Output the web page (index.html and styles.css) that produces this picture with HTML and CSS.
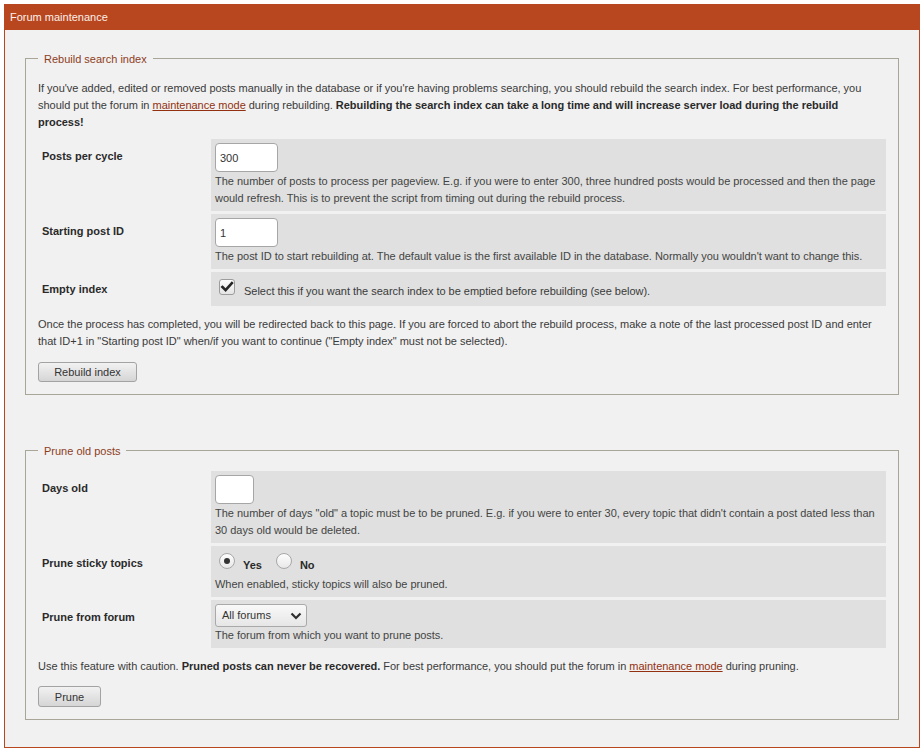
FILE: index.html
```html
<!DOCTYPE html>
<html lang="en">
<head>
<meta charset="utf-8">
<title>Forum maintenance</title>
<link rel="stylesheet" href="styles.css">
</head>
<body>
<div class="panel">
  <h1 class="panel-head">Forum maintenance</h1>
  <div class="panel-body">
    <fieldset class="box">
      <legend>Rebuild search index</legend>
      <p class="intro">If you've added, edited or removed posts manually in the database or if you're having problems searching, you should rebuild the search index. For best performance, you should put the forum in <a href="#">maintenance mode</a> during rebuilding. <strong>Rebuilding the search index can take a long time and will increase server load during the rebuild process!</strong></p>
      <dl class="row">
        <dt>Posts per cycle</dt>
        <dd>
          <input class="text w-wide" type="text" value="300">
          <p class="desc after-input">The number of posts to process per pageview. E.g. if you were to enter 300, three hundred posts would be processed and then the page would refresh. This is to prevent the script from timing out during the rebuild process.</p>
        </dd>
      </dl>
      <dl class="row">
        <dt>Starting post ID</dt>
        <dd>
          <input class="text w-wide" type="text" value="1">
          <p class="desc after-input">The post ID to start rebuilding at. The default value is the first available ID in the database. Normally you wouldn't want to change this.</p>
        </dd>
      </dl>
      <dl class="row last">
        <dt>Empty index</dt>
        <dd>
          <label class="choice">
            <span class="check"><svg width="14" height="14" viewBox="0 0 14 14"><path d="M2.4 7 L5.6 10.2 L11.9 3" fill="none" stroke="#262626" stroke-width="2.6" stroke-linecap="square"/></svg></span>
            <span class="choice-text">Select this if you want the search index to be emptied before rebuilding (see below).</span>
          </label>
        </dd>
      </dl>
      <p class="note">Once the process has completed, you will be redirected back to this page. If you are forced to abort the rebuild process, make a note of the last processed post ID and enter that ID+1 in "Starting post ID" when/if you want to continue ("Empty index" must not be selected).</p>
      <button class="btn btn-rebuild" type="button">Rebuild index</button>
    </fieldset>

    <fieldset class="box">
      <legend>Prune old posts</legend>
      <dl class="row">
        <dt>Days old</dt>
        <dd>
          <input class="text w-narrow" type="text" value="">
          <p class="desc after-input">The number of days "old" a topic must be to be pruned. E.g. if you were to enter 30, every topic that didn't contain a post dated less than 30 days old would be deleted.</p>
        </dd>
      </dl>
      <dl class="row">
        <dt>Prune sticky topics</dt>
        <dd>
          <div class="radios">
            <label class="choice"><span class="radio on"></span><span class="choice-text strong">Yes</span></label>
            <label class="choice"><span class="radio"></span><span class="choice-text strong">No</span></label>
          </div>
          <p class="desc">When enabled, sticky topics will also be pruned.</p>
        </dd>
      </dl>
      <dl class="row last">
        <dt>Prune from forum</dt>
        <dd>
          <div class="select"><span>All forums</span><svg width="12" height="8" viewBox="0 0 12 8"><path d="M1.5 1.5 L6 6 L10.5 1.5" fill="none" stroke="#2e2e2e" stroke-width="2.2"/></svg></div>
          <p class="desc">The forum from which you want to prune posts.</p>
        </dd>
      </dl>
      <p class="note">Use this feature with caution. <strong>Pruned posts can never be recovered.</strong> For best performance, you should put the forum in <a href="#">maintenance mode</a> during pruning.</p>
      <button class="btn btn-prune" type="button">Prune</button>
    </fieldset>
  </div>
</div>
</body>
</html>
```

FILE: styles.css
```css
* { box-sizing: border-box; }

body {
  margin: 4px 3px 3px 4px;
  background: #ffffff;
  font-family: "Liberation Sans", Arial, sans-serif;
  font-size: 11px;
  line-height: 17px;
  color: #3a3a3a;
}

.panel {
  border: 1px solid #b8461f;
  background: #f1f1f1;
}

.panel-head {
  margin: 0;
  height: 25px;
  line-height: 24px;
  padding: 0 5px;
  background: #b8461f;
  color: #fbf0ea;
  font-size: 11px;
  font-weight: normal;
}

.panel-body {
  padding: 19px 20px 27px;
}

.box {
  margin: 0 0 46px;
  padding: 11px 12px 12px;
  border: 1px solid #aaa697;
  min-width: 0;
}

.box:last-child { margin-bottom: 0; }

.box legend {
  padding: 1px 6px 0;
  color: #8e3d1b;
  font-size: 11px;
  line-height: 18px;
}

p { margin: 0; }

.intro,
.note,
.desc,
.choice-text { letter-spacing: -0.02px; }

.intro { margin: 1px 0 8px; }

a { color: #93300f; text-decoration: underline; }

strong { color: #2a2a2a; }

.row {
  display: flex;
  margin: 0 0 3px;
}

.row.last { margin-bottom: 10px; }

.row dt {
  width: 173px;
  flex: none;
  padding: 9px 4px 7px;
  font-weight: bold;
  color: #2a2a2a;
}

.row dd {
  flex: 1;
  margin: 0;
  padding: 4px;
  background: #dfe0df;
}

.text {
  display: block;
  height: 29px;
  border: 1px solid #a6a6a6;
  border-radius: 4px;
  background: #fff;
  padding: 0 4px;
  font-family: inherit;
  font-size: 11px;
  color: #333;
}

.w-wide { width: 63px; }
.w-narrow { width: 39px; }

.desc { color: #444; }
.desc.after-input { margin-top: 1px; }

.choice {
  display: inline-flex;
  align-items: flex-start;
}

.check {
  width: 16px;
  height: 16px;
  margin: 3px 9px 0 4px;
  border: 1px solid #9c9c9c;
  border-radius: 3px;
  background: linear-gradient(#fdfdfd, #e4e4e4);
  display: flex;
  align-items: center;
  justify-content: center;
}

.choice-text {
  padding: 7px 0 2px;
}

.choice-text.strong {
  font-weight: bold;
  color: #2a2a2a;
}

.radios {
  display: flex;
}

.radio {
  width: 16px;
  height: 16px;
  margin: 3px 8px 0 4px;
  border: 1px solid #a8a8a8;
  border-radius: 50%;
  background: linear-gradient(#fdfdfd, #e8e8e8);
  display: flex;
  align-items: center;
  justify-content: center;
}

.radio.on::after {
  content: "";
  width: 6px;
  height: 6px;
  border-radius: 50%;
  background: #333;
}

.radios .choice + .choice .radio { margin-left: 14px; }

.select {
  width: 92px;
  height: 23px;
  display: flex;
  align-items: center;
  justify-content: space-between;
  padding: 0 4px 0 6px;
  border: 1px solid #a9a9a9;
  border-radius: 3px;
  background: linear-gradient(#f9f9f9, #e6e6e6);
  color: #333;
}

.btn {
  display: block;
  height: 20px;
  border: 1px solid #a3a3a3;
  border-radius: 3px;
  background: linear-gradient(#f2f2f2, #d5d5d5);
  font-family: inherit;
  font-size: 11px;
  color: #333;
  padding: 0;
}

.note { margin: 0 0 12px; }
.box:last-child .note { margin-bottom: 11px; }

.btn-rebuild { width: 99px; }
.btn-prune { width: 63px; height: 21px; }
```
